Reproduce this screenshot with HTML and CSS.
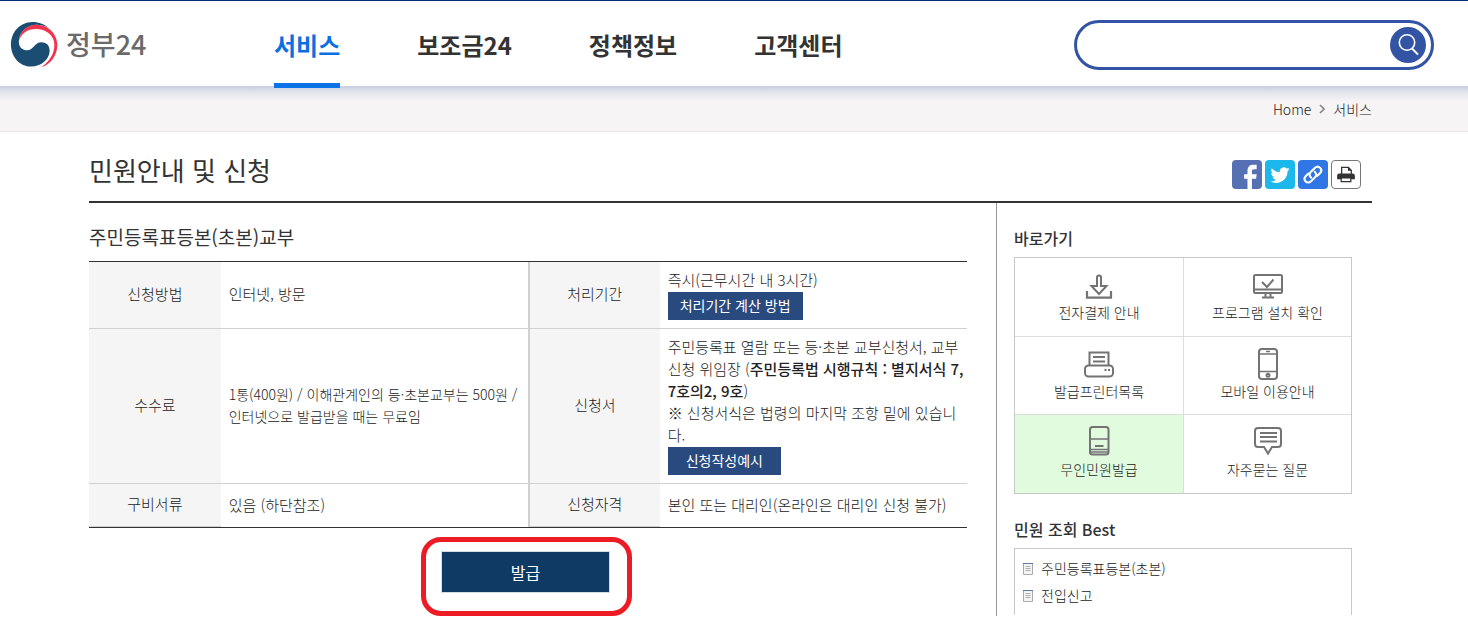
FILE: index.html
```html
<!DOCTYPE html>
<html lang="ko">
<head>
<meta charset="utf-8">
<meta name="viewport" content="width=device-width, initial-scale=1">
<title>민원안내 및 신청 | 정부24</title>
<link rel="stylesheet" href="styles.css">
</head>
<body>
<header class="header">
  <a class="logo" href="#">
    <svg class="logo-mark" viewBox="30 62 144 141" aria-hidden="true">
      <path fill="#1b4d73" d="M148 84C120 58 70 56 45 92C22 125 32 175 68 193C105 210 148 186 149 152C149 134 138 126 124 126C104 126 100 150 82 150C66 150 54 138 57 118C60 92 85 72 112 73C128 74 140 78 148 84Z"/>
      <path fill="#f23350" d="M57 122C58 95 80 73 110 73C145 74 172 100 172 134C172 165 152 192 124 201C148 184 164 160 163 132C162 104 138 86 108 86C82 86 63 100 57 122Z"/>
    </svg>
    <span class="logo-text">정부24</span>
  </a>
  <nav class="nav">
    <a class="nav-link active" href="#">서비스</a>
    <a class="nav-link" href="#">보조금24</a>
    <a class="nav-link" href="#">정책정보</a>
    <a class="nav-link" href="#">고객센터</a>
  </nav>
  <form class="search">
    <input class="search-input" type="text" aria-label="검색어">
    <button class="search-button" type="button" aria-label="검색">
      <svg width="36" height="36" viewBox="0 0 36 36" fill="none" stroke="#fff" stroke-width="1.6" aria-hidden="true"><circle cx="17" cy="15.5" r="7.7"/><path d="M22 21.500L28 27.500" stroke-width="2"/></svg>
    </button>
  </form>
</header>

<div class="crumb-bar">
  <nav class="crumbs" aria-label="현재 위치">
    <a href="#">Home</a>
    <svg width="6" height="10" viewBox="0 0 6 10" fill="none" stroke="#8b8288" stroke-width="1.600" aria-hidden="true"><path d="M1 1l4 4-4 4"/></svg>
    <a href="#">서비스</a>
  </nav>
</div>

<div class="page">
  <div class="title-row">
    <h1 class="title">민원안내 및 신청</h1>
    <div class="share">
      <button class="share-button facebook" type="button" aria-label="페이스북"><svg viewBox="0 0 30 30" aria-hidden="true"><path fill="#fff" d="M15.500 30V19.500H12V14.800h3.500V11.500C15.500 7 18 5 21.500 5H25v4.600h-2.500c-1.900 0-2.400.9-2.400 2.400v2.800H25l-.6 4.700h-4.300V30z"/></svg></button>
      <button class="share-button twitter" type="button" aria-label="트위터"><svg viewBox="0 0 30 30" aria-hidden="true"><path fill="#fff" d="M25 9.500c-.7.300-1.500.5-2.300.6.800-.5 1.400-1.200 1.700-2.100-.8.400-1.600.8-2.500.9a4.200 4.200 0 0 0-7.100 3.800c-3.400-.2-6.300-1.800-8.300-4.200-1.100 2-.5 4.200 1.200 5.400-.7 0-1.300-.2-1.800-.5 0 2 1.400 3.700 3.200 4.100-.6.200-1.200.2-1.800.1.500 1.600 2 2.700 3.800 2.800A8.400 8.400 0 0 1 5 22.100c7.500 4.500 18-.2 17.800-10.600.900-.5 1.600-1.200 2.200-2z"/></svg></button>
      <button class="share-button link" type="button" aria-label="링크 복사"><svg viewBox="1 1 28 28" fill="none" stroke="#fff" stroke-width="2" stroke-linecap="round" aria-hidden="true"><path d="M13.200 18c-2-1.600-1.900-3.900-.4-5.400l3.900-3.900c1.600-1.600 3.800-1.500 5.200-.1s1.400 3.500 0 5l-2.600 2.600M16.600 12.300c2 1.600 1.900 3.900.4 5.400l-3.900 3.900c-1.600 1.600-3.800 1.500-5.200.1s-1.400-3.500 0-5l2.600-2.600"/></svg></button>
      <button class="share-button print" type="button" aria-label="인쇄"><svg viewBox="1 1 28 28" aria-hidden="true"><path fill="#fff" stroke="#333" stroke-width="1.300" d="M10.500 15V7.500h7l3 3V15"/><path fill="#333" d="M17 7l4 4h-4zM8 14h14a2.200 2.200 0 0 1 2.200 2.200V20H5.800v-3.800A2.200 2.200 0 0 1 8 14z"/><path fill="#fff" stroke="#333" stroke-width="1.300" d="M10 18.500h10v3.800H10z"/></svg></button>
    </div>
  </div>

  <div class="columns">
    <main class="main">
      <h2 class="subtitle">주민등록표등본(초본)교부</h2>
      <table class="info">
        <tbody>
          <tr>
            <th scope="row">신청방법</th>
            <td>인터넷, 방문</td>
            <th scope="row" class="second">처리기간</th>
            <td>즉시(근무시간 내 3시간)<br><button class="small-button" type="button">처리기간 계산 방법</button></td>
          </tr>
          <tr>
            <th scope="row">수수료</th>
            <td class="compact">1통(400원) / 이해관계인의 등·초본교부는 500원 /<br>인터넷으로 발급받을 때는 무료임</td>
            <th scope="row" class="second">신청서</th>
            <td>주민등록표 열람 또는 등·초본 교부신청서, 교부<br>신청 위임장 (<b>주민등록법 시행규칙 : 별지서식 7,<br>7호의2, 9호</b>)<br>※ 신청서식은 법령의 마지막 조항 밑에 있습니<br>다.<br><button class="small-button example" type="button">신청작성예시</button></td>
          </tr>
          <tr>
            <th scope="row">구비서류</th>
            <td>있음 (하단참조)</td>
            <th scope="row" class="second">신청자격</th>
            <td>본인 또는 대리인(온라인은 대리인 신청 불가)</td>
          </tr>
        </tbody>
      </table>
      <div class="issue-row">
        <div class="highlight"><button class="issue-button" type="button">발급</button></div>
      </div>
    </main>

    <aside class="side">
      <h3 class="side-title">바로가기</h3>
      <div class="shortcuts">
        <a class="shortcut" href="#"><svg viewBox="0 0 32 32" aria-hidden="true"><path d="M14 17V8.500a2 2 0 0 1 4 0V17h5.500L16 25l-7.500-8z"/><path d="M4 22v6.700h24V22" stroke-width="2.200"/></svg>전자결제 안내</a>
        <a class="shortcut" href="#"><svg viewBox="0 0 32 32" aria-hidden="true"><rect x="2" y="6" width="28" height="18" rx="1.500"/><path d="M2 20.500h28M10 13l5 5 6.500-7.500M13.500 24v4M18.500 24v4M10 28.500h12"/></svg>프로그램 설치 확인</a>
        <a class="shortcut" href="#"><svg viewBox="0 0 32 32" aria-hidden="true"><path d="M6.500 17V4.500h19V17M10 9h12M10 13.500h12"/><rect x="2" y="17.500" width="28" height="11" rx="3.500"/><path d="M21.500 22h2M25 22h2"/></svg>발급프린터목록</a>
        <a class="shortcut" href="#"><svg viewBox="0 0 32 32" aria-hidden="true"><rect x="7" y="1" width="18" height="30" rx="3"/><path d="M7 6h18M7 23.500h18M14 3.500h4" stroke-width="1.500"/><circle cx="16" cy="27.300" r="1.500"/></svg>모바일 이용안내</a>
        <a class="shortcut current" href="#"><svg viewBox="0 0 32 32" aria-hidden="true"><rect x="7" y="1" width="18.500" height="27.500" rx="2.500"/><path d="M7 13h18.500M7 23.500h18.500M7 26h18.500" stroke-width="1.500"/><path d="M12 20h8.500"/></svg>무인민원발급</a>
        <a class="shortcut" href="#"><svg viewBox="0 0 32 32" aria-hidden="true"><path d="M6 2h20a3 3 0 0 1 3 3v13a3 3 0 0 1-3 3h-6l-4 6.500-4-6.500H6a3 3 0 0 1-3-3V5a3 3 0 0 1 3-3z"/><path d="M8 7h17M8 11h17M8 15.500h17"/></svg>자주묻는 질문</a>
      </div>
      <h3 class="side-title">민원 조회 Best</h3>
      <ul class="best">
        <li><svg width="10" height="12" viewBox="0 0 10 12" aria-hidden="true"><path fill="#f4f4f4" stroke="#aaa" d="M.5.5h9v11h-9z"/><path stroke="#5b7ba3" d="M0 .5h10"/><path stroke="#b0b0b0" d="M2.500 3.500h5M2.500 5.500h5M2.500 7.500h5"/></svg><a href="#">주민등록표등본(초본)</a></li>
        <li><svg width="10" height="12" viewBox="0 0 10 12" aria-hidden="true"><path fill="#f4f4f4" stroke="#aaa" d="M.5.5h9v11h-9z"/><path stroke="#5b7ba3" d="M0 .5h10"/><path stroke="#b0b0b0" d="M2.500 3.500h5M2.500 5.500h5M2.500 7.500h5"/></svg><a href="#">전입신고</a></li>
      </ul>
    </aside>
  </div>
</div>
</body>
</html>
```
FILE: styles.css
```css
* { box-sizing: border-box; }

body {
  margin: 0;
  background: #fff;
  color: #222;
  font: 300 15px/22px "Noto Sans CJK KR", sans-serif;
}

a { color: inherit; text-decoration: none; }

button, input { font: inherit; }

button { cursor: pointer; }

h1, h2, h3, ul { margin: 0; padding: 0; }

.header {
  position: relative;
  display: flex;
  align-items: center;
  height: 86px;
  padding: 0 34px 0 10px;
  border-top: 1px solid #002d72;
  background: #fff;
}

.logo {
  display: flex;
  align-items: center;
  gap: 8px;
  width: 264px;
  padding-top: 2px;
}

.logo-mark { width: 48px; height: 47px; }

.logo-text {
  padding-bottom: 2px;
  color: #6a6a6a;
  font-size: 27px;
  font-weight: 500;
  line-height: 40px;
}

.nav { display: flex; align-self: stretch; gap: 77px; }

.nav-link {
  height: 87px;
  color: #333;
  font-size: 24px;
  font-weight: 700;
  line-height: 88px;
  white-space: nowrap;
}

.nav-link.active { border-bottom: 5px solid #0b72e7; color: #0b6fe4; }

.search {
  display: flex;
  align-items: center;
  width: 360px;
  height: 50px;
  margin-left: auto;
  margin-top: 2px;
  padding: 0 5px 0 20px;
  border: 3px solid #3353a4;
  border-radius: 25px;
}

.search-input { flex: 1; min-width: 0; border: 0; outline: 0; background: none; }

.search-button {
  width: 36px;
  height: 36px;
  padding: 0;
  border: 0;
  border-radius: 50%;
  background: #3353a4;
}

.search-button svg { display: block; }

.crumb-bar {
  height: 46px;
  padding: 0 96px 0 89px;
  border-bottom: 1px solid #e9e6e7;
  background: linear-gradient(#c7cde0, #e2e4ec 6px, #f6f4f5 15px);
}

.crumbs {
  display: flex;
  align-items: center;
  justify-content: flex-end;
  gap: 8px;
  padding-top: 12px;
  font-size: 14px;
}

.page { padding: 0 96px 0 89px; }

.title-row {
  display: flex;
  align-items: center;
  justify-content: space-between;
  height: 71px;
  padding-right: 11px;
  border-bottom: 2px solid #333;
}

.title {
  padding-top: 6px;
  color: #333;
  font-size: 26px;
  font-weight: 400;
  line-height: 40px;
}

.share { display: flex; gap: 3px; padding-top: 15px; }

.share-button {
  width: 30px;
  height: 29px;
  padding: 0;
  border: 0;
  border-radius: 4px;
  overflow: hidden;
}

.share-button svg { display: block; width: 100%; height: 100%; }

.facebook { background: #5571b3; }
.twitter { background: #1cb7eb; }
.link { background: #3076e5; }
.print { border: 1px solid #777; background: #fff; }

.columns { display: flex; }

.main { flex: 1; min-width: 0; padding-right: 29px; }

.subtitle {
  padding: 19px 0 9px;
  color: #333;
  font-size: 19px;
  font-weight: 400;
  line-height: 30px;
}

.info {
  width: 100%;
  border-top: 1px solid #333;
  border-bottom: 1px solid #333;
  border-collapse: separate;
  border-spacing: 0;
  table-layout: fixed;
}

.info th, .info td { border-bottom: 1px solid #d0d0d0; vertical-align: middle; }

.info th {
  width: 15%;
  padding: 0 0 2px;
  background: #f5f5f5;
  font-weight: 300;
  text-align: center;
}

.info th.second { border-left: 2px solid #d0d0d0; }

.info td { width: 35%; padding: 7px 8px 9px; white-space: nowrap; }

.info td:has(.small-button) { padding-bottom: 8px; }

.info td.compact { font-size: 14px; }

.info tr:last-child td { padding: 10px 8px 11px; border-bottom: 0; }

.info b { font-weight: 500; }

.small-button {
  display: block;
  height: 28px;
  margin-top: 1px;
  padding: 0 12px 2px;
  border: 0;
  background: #284a7e;
  color: #fff;
  font-size: 14px;
  font-weight: 400;
}

.small-button.example { padding: 0 18px 2px; }

.issue-row { display: flex; justify-content: center; padding: 9px 3px 0 0; }

.highlight {
  padding: 9px 17px 18px 15px;
  border: 5px solid #ed1c24;
  border-radius: 20px;
}

.issue-button {
  display: block;
  width: 169px;
  height: 42px;
  padding: 0;
  border: 1px solid #d5dbe3;
  background: #0f3a64;
  color: #fff;
  font-size: 16px;
  font-weight: 400;
}

.side {
  width: 376px;
  padding: 0 20px 0 17px;
  border-left: 1px solid #999;
}

.side-title {
  padding: 23px 0 7px;
  color: #333;
  font-size: 16px;
  font-weight: 500;
  line-height: 24px;
}

.shortcuts {
  display: grid;
  grid-template-columns: 169fr 167fr;
  grid-template-rows: 79px 78px 78px;
  border: 1px solid #c8c8c8;
}

.shortcut {
  display: flex;
  flex-direction: column;
  align-items: center;
  padding-top: 11px;
  border-bottom: 1px solid #ddd;
  font-size: 14px;
  line-height: 22px;
}

.shortcut:nth-child(odd) { border-right: 1px solid #ddd; }

.shortcut:nth-last-child(-n+2) { border-bottom: 0; }

.shortcut.current { background: #e1fbdf; }

.shortcut svg {
  width: 32px;
  height: 32px;
  fill: none;
  stroke: #737373;
  stroke-width: 2;
}

.best {
  padding: 6px 8px;
  border: 1px solid #c8c8c8;
  border-bottom: 0;
  font-size: 14px;
  line-height: 27px;
  list-style: none;
}

.best li { display: flex; align-items: center; gap: 8px; }
```
